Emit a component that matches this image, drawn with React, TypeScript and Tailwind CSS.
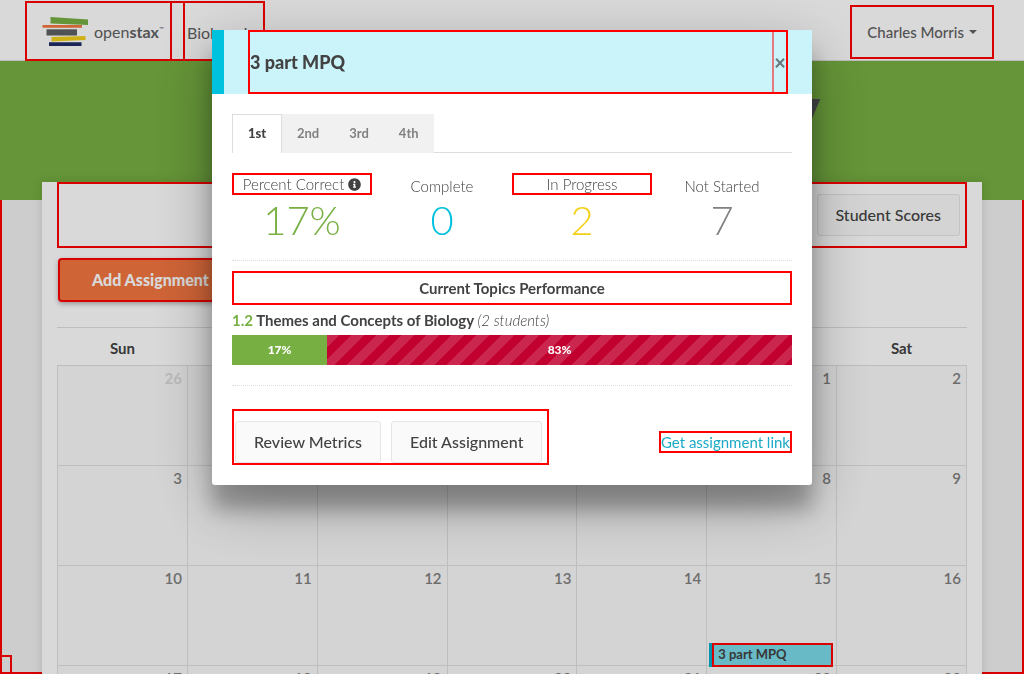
import React from "react";
import { FaInfoCircle } from "react-icons/fa";

const weekdays = ["Sun", "Mon", "Tue", "Wed", "Thu", "Fri", "Sat"];
const weeks = [
  [26, 27, 28, 29, 30, 1, 2],
  [3, 4, 5, 6, 7, 8, 9],
  [10, 11, 12, 13, 14, 15, 16],
  [17, 18, 19, 20, 21, 22, 23],
];

const stats = [
  { label: "Percent Correct", value: "17%", color: "text-[#77af42]", framed: true, info: true },
  { label: "Complete", value: "0", color: "text-[#00c1de]", framed: false, info: false },
  { label: "In Progress", value: "2", color: "text-[#f4d019]", framed: true, info: false },
  { label: "Not Started", value: "7", color: "text-[#818181]", framed: false, info: false },
];

function Logo() {
  return (
    <a href="#home" aria-label="openstax" className="flex items-center gap-[5px] text-[#5f6163]">
      <svg width="47" height="32" viewBox="0 0 47 32" aria-hidden="true">
        <path d="M8.500 1 L46 3.500 V9 L8.500 7.500 Z" fill="#77af42" />
        <path d="M0.500 9 H40 V11.800 H0.500 Z" fill="#f47641" />
        <path d="M4.500 13.300 H35 V19.500 H4.500 Z" fill="#5f6163" />
        <path d="M9.500 21 L43.500 20 V24 L9.500 25.500 Z" fill="#f4d019" />
        <path d="M7 26.200 H39.500 V30 H7 Z" fill="#202c66" />
      </svg>
      <span className="flex text-base leading-5">
        <span>open</span>
        <span className="font-bold">stax</span>
        <span className="text-[6px] leading-[14px]">™</span>
      </span>
    </a>
  );
}

function Calendar() {
  return (
    <table className="w-full table-fixed border-collapse">
      <thead>
        <tr>
          {weekdays.map((d) => (
            <th key={d} scope="col" className="h-[37px] border-b border-[#dfdfdf] pt-1 text-[15px] font-bold text-[#424242]">
              {d}
            </th>
          ))}
        </tr>
      </thead>
      <tbody>
        {weeks.map((week) => (
          <tr key={week[0]}>
            {week.map((day) => (
              <td key={day} className="relative h-[100px] border border-[#e0e0e0] bg-[#f9f9f9] bg-clip-padding px-[5px] py-[3px] text-right align-top">
                <span
                  className={
                    day > 23
                      ? "block text-[15px] font-bold leading-[18px] text-[#dcdcdc]"
                      : "block text-[15px] font-semibold leading-[18px] text-[#818181]"
                  }
                >
                  {day}
                </span>
                {day === 15 && (
                  <button type="button" className="absolute left-[2px] right-[3px] -bottom-[2px] z-10 flex h-6 border-l-[3px] border-[#00b0cc]">
                    <span className="h-full w-full border-2 border-[#ff0000] bg-[#7adbe9] px-1 text-left text-[13px] font-bold leading-[19px] text-[#424242]">
                      3 part MPQ
                    </span>
                  </button>
                )}
              </td>
            ))}
          </tr>
        ))}
      </tbody>
    </table>
  );
}

function Modal() {
  return (
    <div className="fixed inset-0 z-20 flex items-start justify-center bg-black/15 pt-[30px]">
      <section
        role="dialog"
        aria-label="3 part MPQ"
        className="w-[600px] max-w-full rounded-[3px] bg-white shadow-[0_19px_60px_rgba(0,0,0,0.3),0_24px_20px_rgba(0,0,0,0.25)]"
      >
        <header className="h-16 border-l-[12px] border-[#00c1de] bg-[#cbf3fa] px-6">
          <div className="flex h-full border-2 border-[#ff0000]">
            <h2 className="flex flex-1 items-center border-r-2 border-[#ff0000]/50 text-lg font-black text-[#424242]">3 part MPQ</h2>
            <button type="button" aria-label="Close" className="flex w-3 items-center justify-center text-xl font-black text-[#68797c]">
              ×
            </button>
          </div>
        </header>
        <div className="p-5 text-[#424242]">
          <div role="tablist" className="flex h-[39px] border-b border-[#dddddd] text-[13px] font-bold">
            <button type="button" role="tab" aria-selected="true" className="-mb-px w-[50px] border border-b-0 border-[#dddddd] bg-white font-black">
              1st
            </button>
            {["2nd", "3rd", "4th"].map((t) => (
              <button key={t} type="button" role="tab" aria-selected="false" className="-mb-px bg-[#f1f1f1] px-[15px] text-[#818181]">
                {t}
              </button>
            ))}
          </div>
          <div className="mt-5 grid grid-cols-4 text-center">
            {stats.map((s) => (
              <div key={s.label}>
                <div
                  className={
                    s.framed
                      ? "flex h-[22px] items-center justify-center gap-1 border-2 border-[#ff0000] text-[15px] font-light"
                      : "flex h-[22px] items-center justify-center pt-1 text-[15px] font-light"
                  }
                >
                  {s.label}
                  {s.info && <FaInfoCircle className="size-[13px]" />}
                </div>
                <div className={"text-[40px] font-light leading-[50px] " + s.color}>{s.value}</div>
              </div>
            ))}
          </div>
          <div className="mt-[15px] border-y border-dotted border-[#dddddd] pb-5 pt-[10px]">
            <h3 className="border-2 border-[#ff0000] text-center text-[15px] font-bold leading-[30px]">Current Topics Performance</h3>
            <p className="py-[5px] text-[15px] font-bold leading-5">
              <span className="text-[#77af42]">1.2</span> Themes and Concepts of Biology{" "}
              <span className="font-light italic">(2 students)</span>
            </p>
            <div className="flex text-center text-xs font-black leading-[30px] text-white">
              <div className="w-[17%] bg-[#77af42]">17%</div>
              <div className="flex-1 bg-[#c2002f] bg-[linear-gradient(135deg,rgba(255,255,255,0.15)_25%,transparent_25%,transparent_50%,rgba(255,255,255,0.15)_50%,rgba(255,255,255,0.15)_75%,transparent_75%,transparent)] bg-[length:25px_25px]">
                83%
              </div>
            </div>
          </div>
          <footer className="mt-[23px] flex items-end justify-between">
            <div className="flex h-14 items-end gap-[10px] border-2 border-[#ff0000] pl-px pr-[5px]">
              {["Review Metrics", "Edit Assignment"].map((b) => (
                <button key={b} type="button" className="h-[42px] rounded-[3px] border border-[#e5e5e5] bg-[#fafafa] px-[18px] text-base font-medium">
                  {b}
                </button>
              ))}
            </div>
            <a href="#link" className="mb-3 h-[22px] border-2 border-[#ff0000] text-[15px] leading-[18px] text-[#1caac6]">
              Get assignment link
            </a>
          </footer>
        </div>
      </section>
    </div>
  );
}

export default function App() {
  return (
    <div className="flex h-screen flex-col overflow-hidden bg-[#f1f1f1] font-['Lato',sans-serif] text-[#5f6163]">
      <nav className="flex h-[61px] shrink-0 justify-between border-b border-[#dddddd] bg-white pl-[25px] pr-[30px]">
        <div className="mt-px flex h-[60px]">
          <div className="border-2 border-r-0 border-[#ff0000] pr-[11px]">
            <div className="flex h-full w-[145px] items-center border-r-2 border-[#ff0000] pl-[15px] pt-[2px]">
              <Logo />
            </div>
          </div>
          <a href="#course" className="flex w-[82px] items-center whitespace-nowrap border-2 border-[#ff0000] pl-[2px] pt-1 text-base">
            Biology I
          </a>
        </div>
        <button type="button" className="mt-[5px] flex h-[54px] items-center gap-[5px] border-2 border-[#ff0000] px-[15px] text-[15px] font-medium">
          Charles Morris
          <svg width="8" height="4" viewBox="0 0 8 4" aria-hidden="true">
            <path d="M0 0 H8 L4 4 Z" fill="currentColor" />
          </svg>
        </button>
      </nav>
      <div className="h-[139px] shrink-0 overflow-hidden bg-[#77af42] px-[204px] pt-2">
        <h1 className="whitespace-nowrap text-right text-[80px] font-black leading-[80px] text-[#505354]">Biology</h1>
      </div>
      <main className="relative min-h-0 flex-1 border-2 border-t-0 border-[#ff0000] px-10">
        <div className="-mt-[18px] h-[800px] bg-white px-[15px] shadow-[0_0_10px_rgba(0,0,0,0.12)]">
          <div className="flex h-[66px] items-start justify-end border-2 border-[#ff0000] px-[5px] py-[10px]">
            <button type="button" className="h-[42px] rounded-[3px] border border-[#e5e5e5] bg-[#fafafa] px-[18px] text-base font-medium text-[#424242]">
              Student Scores
            </button>
          </div>
          <button type="button" className="ml-px mt-[10px] h-11 rounded-[4px] border-2 border-[#ff0000] bg-[#f47641] px-8 text-base font-black text-white shadow-[0_2px_5px_rgba(0,0,0,0.3)]">
            Add Assignment
          </button>
          <div className="mt-[25px] border-t border-[#dfdfdf]">
            <Calendar />
          </div>
        </div>
        <div className="absolute bottom-0 -left-[2px] h-[17px] w-3 border-2 border-b-0 border-[#ff0000]" />
      </main>
      <Modal />
    </div>
  );
}
